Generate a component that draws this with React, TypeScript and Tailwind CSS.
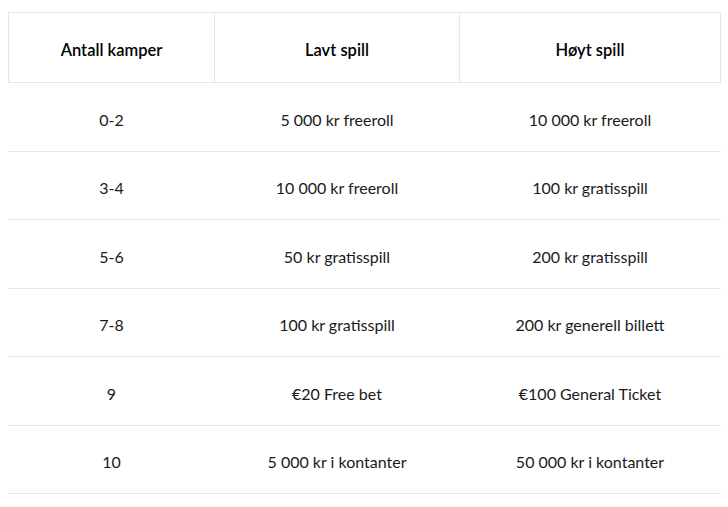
const ROWS = [
  ['0-2', '5 000 kr freeroll', '10 000 kr freeroll'],
  ['3-4', '10 000 kr freeroll', '100 kr gratisspill'],
  ['5-6', '50 kr gratisspill', '200 kr gratisspill'],
  ['7-8', '100 kr gratisspill', '200 kr generell billett'],
  ['9', '€20 Free bet', '€100 General Ticket'],
  ['10', '5 000 kr i kontanter', '50 000 kr i kontanter'],
];

export default function App() {
  return (
    <div className="min-h-[507px] bg-white px-2 pt-3 font-['Lato',sans-serif] text-[16px] text-[#1a1a1a]">
      <table className="w-[712px] border-collapse table-fixed">
        <colgroup>
          <col className="w-[206px]" />
          <col className="w-[245px]" />
          <col className="w-[261px]" />
        </colgroup>
        <thead>
          <tr className="h-[70px]">
            <th className="border border-[#e6e6e6] pt-1.5 text-[16.5px] font-semibold text-black">Antall kamper</th>
            <th className="border border-[#e6e6e6] pt-1.5 text-[16.5px] font-semibold text-black">Lavt spill</th>
            <th className="border border-[#e6e6e6] pt-1.5 text-[16.5px] font-semibold text-black">Høyt spill</th>
          </tr>
        </thead>
        <tbody>
          {ROWS.map((row) => (
            <tr key={row[0]} className="h-[68.5px] border-b border-[#e6e6e6]">
              {row.map((cell, i) => (
                <td key={i} className="pt-1.5 text-center">
                  {cell}
                </td>
              ))}
            </tr>
          ))}
        </tbody>
      </table>
    </div>
  );
}
